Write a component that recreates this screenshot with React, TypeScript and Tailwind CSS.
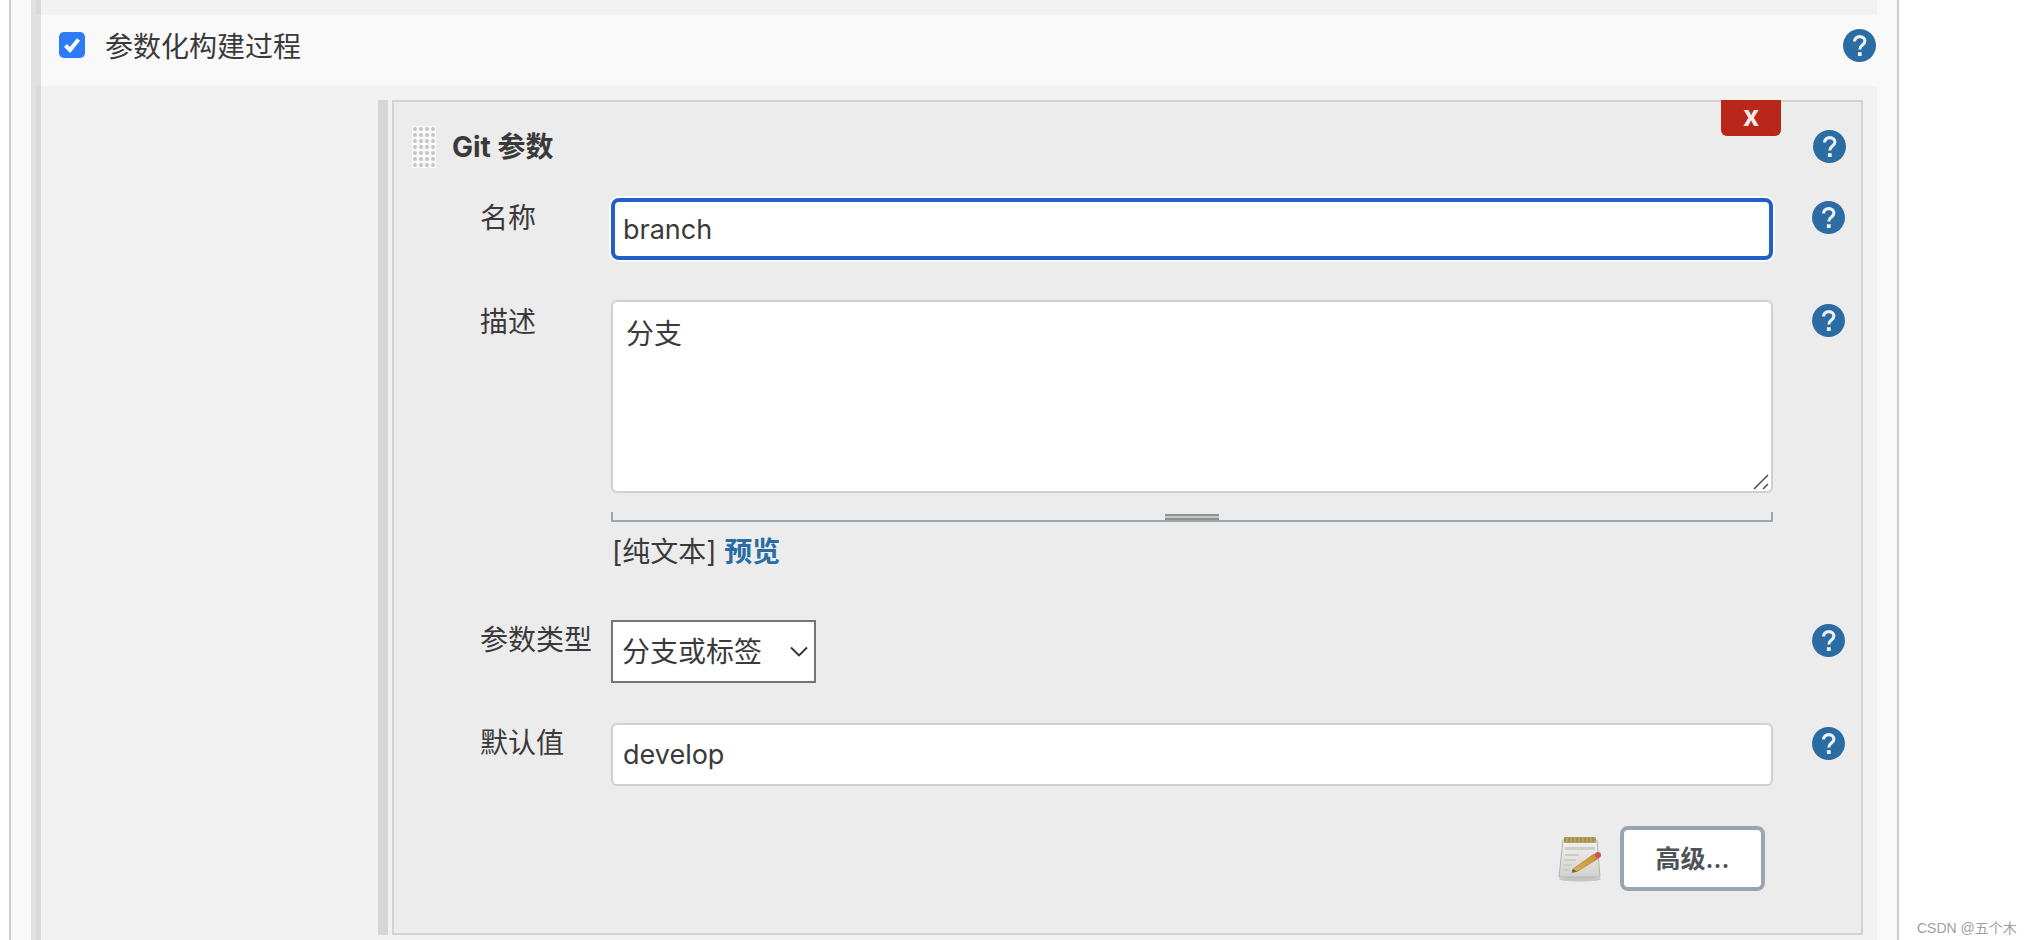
import React from 'react';

function HelpIcon({ className = '' }: { className?: string }) {
  return (
    <svg width="33" height="33" viewBox="0 0 33 33" className={`shrink-0 ${className}`}>
      <circle cx="16.5" cy="16.5" r="16.5" fill="#2b6ca3" />
      <path
        d="M11.6 12.6C11.6 9.6 13.8 7.6 16.8 7.6C19.8 7.6 21.9 9.5 21.9 12.1C21.9 14.1 20.7 15.1 19.2 16.2C17.6 17.3 16.8 18.1 16.8 20.4"
        fill="none"
        stroke="#eef2f5"
        strokeWidth="3.1"
      />
      <rect x="14.9" y="23.2" width="3.8" height="3.8" fill="#eef2f5" />
    </svg>
  );
}

function NotepadIcon() {
  return (
    <svg width="46" height="46" viewBox="0 0 46 46" className="shrink-0">
      <defs>
        <linearGradient id="paper" x1="0" y1="0" x2="0" y2="1">
          <stop offset="0" stopColor="#f2f2ef" />
          <stop offset="1" stopColor="#d2d2ce" />
        </linearGradient>
        <linearGradient id="pencil" x1="0" y1="1" x2="1" y2="0">
          <stop offset="0" stopColor="#dcb35e" />
          <stop offset="1" stopColor="#c98a34" />
        </linearGradient>
      </defs>
      <ellipse cx="22" cy="43" rx="21" ry="2.5" fill="#c4c4c4" />
      <path d="M5 4H39L42 41H1Z" fill="url(#paper)" stroke="#b4b4b0" strokeWidth="1" />
      <rect x="6" y="1" width="32" height="6" rx="1" fill="#b5a360" />
      <path d="M7 1.5V6M11 1.5V6M15 1.5V6M19 1.5V6M23 1.5V6M27 1.5V6M31 1.5V6M35 1.5V6" stroke="#8d7d42" strokeWidth="1" />
      <rect x="7" y="11" width="30" height="3" fill="#cdcdca" />
      <path d="M7 19H21M6 24H18M6 29H14M5 34H12" stroke="#cbcbc7" strokeWidth="2" />
      <path d="M15 33L36 18L41 22L19 35.5L14 36.5Z" fill="url(#pencil)" stroke="#a87a2c" strokeWidth="0.6" />
      <path d="M14 36.5L15 33L19 35.5Z" fill="#6d5a3a" />
      <circle cx="40" cy="19" r="3" fill="#d0524a" />
    </svg>
  );
}

export default function App() {
  return (
    <div className="relative h-[940px] overflow-hidden bg-white font-['Inter','Noto_Sans_CJK_SC',sans-serif] text-[28px] leading-[40px] text-[#3a3a3a]">
      <div className="ml-[9px] flex h-full w-[1890px] flex-col border-x-2 border-[#cccccc] bg-[#f9f9f9] px-[20px]">
        {/* top of previous section */}
        <div className="h-[15px] shrink-0 border-l-[5px] border-[#e0e0e0] bg-[#f2f2f2]">
          <div className="h-full w-[5px] bg-[#d9d9d9]" />
        </div>

        {/* checkbox row */}
        <div className="flex h-[71px] shrink-0 items-center border-l-[10px] border-[#e0e0e0] bg-[#f9f9f9] pb-[10px] pl-[18px] pr-[1px]">
          <div className="-mt-[2px] flex h-[26px] w-[26px] shrink-0 items-center justify-center rounded-[5px] bg-[#2f7bf6]">
            <svg width="20" height="20" viewBox="0 0 20 20">
              <path d="M3.5 10.5L8 15L16.5 4.5" fill="none" stroke="#fff" strokeWidth="4" />
            </svg>
          </div>
          <span className="ml-[20px] mt-[3px]">参数化构建过程</span>
          <HelpIcon className="ml-auto" />
        </div>

        {/* section body */}
        <div className="flex min-h-0 flex-1 border-l-[5px] border-[#e0e0e0]">
          <div className="w-[5px] shrink-0 bg-[#d9d9d9]" />
          <div className="flex min-w-0 flex-1 bg-[#f2f2f2] pb-[5px] pl-[337px] pr-[14px] pt-[14px]">
            <div className="mr-[4px] w-[10px] shrink-0 bg-[#d6d6d6]" />
            <div className="relative flex-1 border-2 border-[#d3d3d3] bg-[#ececec] pt-[24px]">
              <div className="absolute -top-[2px] left-[1327px] flex h-[36px] w-[60px] items-center justify-center rounded-b-[6px] bg-[#b9271a] pb-[4px] font-bold text-[#f0ece8]">
                x
              </div>

              {/* title */}
              <div className="flex h-[42px] items-center pl-[18px]">
                <div className="h-[42px] w-[24px] shrink-0 bg-[#f8f8f8] bg-[radial-gradient(circle_at_3px_3px,#c4c4c4_1.4px,#f8f8f8_2.4px)] bg-[length:6px_6px]" />
                <span className="ml-[16px] font-bold">Git 参数</span>
                <HelpIcon className="ml-auto mr-[15px] -mt-[1px]" />
              </div>

              <div className="pl-[86px]">
                {/* name */}
                <div className="mt-[30px] flex items-start">
                  <label className="w-[132px] shrink-0">名称</label>
                  <input
                    readOnly
                    value="branch"
                    className="-ml-px h-[62px] w-[1162px] rounded-[8px] border-4 border-[#2060c8] bg-white pl-[8px] text-[27px] text-[#3a3a3a] outline-none ring-2 ring-white"
                  />
                  <HelpIcon className="ml-[39px] mt-[3px]" />
                </div>

                {/* description */}
                <div className="mt-[40px] flex items-start">
                  <label className="mt-[2px] w-[132px] shrink-0">描述</label>
                  <div className="-ml-px w-[1162px]">
                    <div className="relative h-[193px]">
                      <textarea
                        readOnly
                        value="分支"
                        className="block h-full w-full resize-none rounded-[6px] border-2 border-[#cfcfcf] bg-white px-[13px] py-[12px] leading-[40px] text-[#3a3a3a] outline-none"
                      />
                      <svg width="16" height="16" viewBox="0 0 16 16" className="absolute bottom-[3px] right-[4px]">
                        <path d="M1 15L15 1M10 15L15 10" stroke="#555" strokeWidth="1.6" fill="none" />
                      </svg>
                    </div>
                    <div className="mt-[19px] flex h-[10px] justify-center border-x-2 border-b-2 border-[#9aa5ad] bg-[#e9edf0]">
                      <div className="mt-[2px] h-[6px] w-[54px] border-y-2 border-[#8c9490] bg-[#c4c8c4]" />
                    </div>
                    <div className="mt-[10px] pl-[1px]">
                      [纯文本] <a className="font-bold text-[#2b6ca3]">预览</a>
                    </div>
                  </div>
                  <HelpIcon className="ml-[39px] mt-[4px]" />
                </div>

                {/* parameter type */}
                <div className="mt-[48px] flex items-start">
                  <label className="w-[132px] shrink-0">参数类型</label>
                  <div className="w-[1161px]">
                    <div className="relative -ml-px h-[63px] w-[205px]">
                      <select className="h-full w-full appearance-none border-2 border-[#757575] bg-white pl-[9px] text-[#3a3a3a] outline-none">
                        <option>分支或标签</option>
                      </select>
                      <svg width="20" height="13" viewBox="0 0 20 13" className="absolute right-[7px] top-[25px]">
                        <path d="M2 2.5L10 10.5L18 2.5" fill="none" stroke="#333" strokeWidth="1.9" />
                      </svg>
                    </div>
                  </div>
                  <HelpIcon className="ml-[39px] mt-[4px]" />
                </div>

                {/* default value */}
                <div className="mt-[40px] flex items-start">
                  <label className="w-[132px] shrink-0">默认值</label>
                  <input
                    readOnly
                    value="develop"
                    className="-ml-px h-[63px] w-[1162px] rounded-[6px] border-2 border-[#cfcfcf] bg-white pl-[10px] text-[27px] text-[#3a3a3a] outline-none"
                  />
                  <HelpIcon className="ml-[39px] mt-[4px]" />
                </div>

                {/* advanced */}
                <div className="mt-[40px] flex w-[1293px] items-center justify-end gap-[16px] pr-[8px]">
                  <NotepadIcon />
                  <button className="h-[65px] w-[145px] rounded-[8px] border-4 border-[#9aa5ad] bg-white text-[25px] font-semibold text-[#4d5358]">
                    高级...
                  </button>
                </div>
              </div>
            </div>
          </div>
        </div>
      </div>

      <div className="absolute left-[1917px] top-[918px] font-['Liberation_Sans','Noto_Sans_CJK_SC',sans-serif] text-[14px] leading-[20px] text-[#a0a0a0]">
        CSDN @五个木
      </div>
    </div>
  );
}
